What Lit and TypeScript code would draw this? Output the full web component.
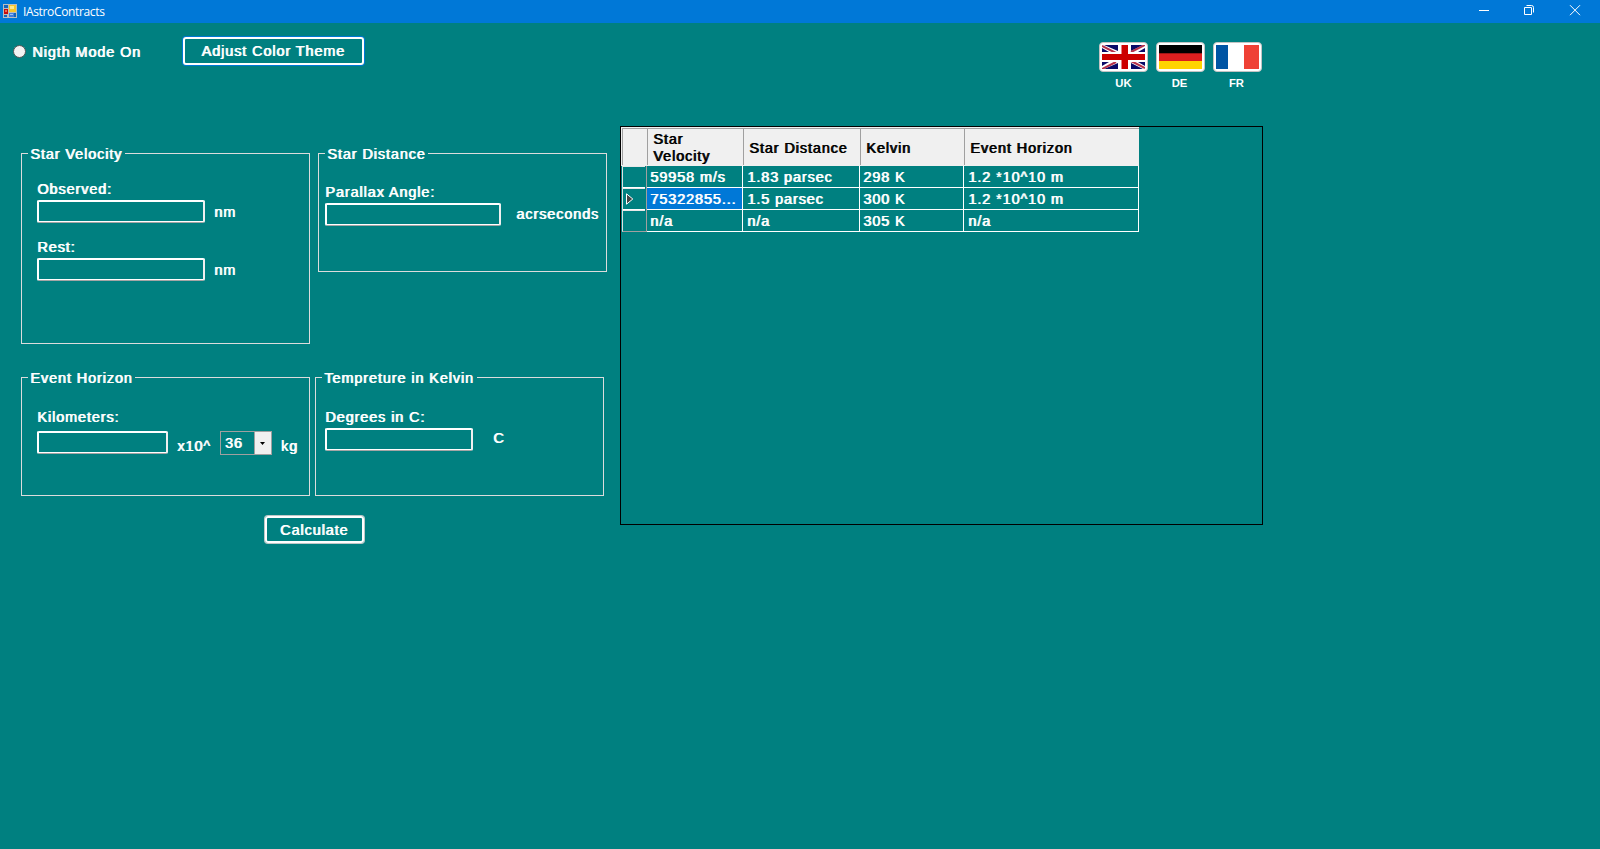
import { LitElement, html, css, svg } from "lit";
import { customElement, property } from "lit/decorators.js";

const ukFlag = svg`
  <svg class="flag" viewBox="0 0 43 24" width="43" height="24">
    <rect width="43" height="24" fill="#fff"/>
    <path d="M2 0H16V6Z M41 0H29V6Z M2 24H16V18Z M41 24H29V18Z M0 3V7H7Z M43 3V7H36Z M0 21V17H7Z M43 21V17H36Z" fill="#0a0a68"/>
    <path d="M0 1L14 8 M43 0L29 7 M0 24L14 17 M43 23L29 16" stroke="#b5304a" stroke-width="2"/>
    <path d="M17 0H28V24H17Z M0 7H43V17H0Z" fill="#fff"/>
    <path d="M19.500 0H26V24H19.500Z M0 9H43V15H0Z" fill="#cc0000"/>
  </svg>`;
const deFlag = svg`
  <svg class="flag" viewBox="0 0 43 24" width="43" height="24">
    <rect width="43" height="8" fill="#000"/>
    <rect y="8" width="43" height="8" fill="#dd1f1f"/>
    <rect y="8" width="43" height="1" fill="#9c1616"/>
    <rect y="16" width="43" height="8" fill="#ffd500"/>
  </svg>`;
const frFlag = svg`
  <svg class="flag" viewBox="0 0 43 24" width="43" height="24">
    <rect width="43" height="24" fill="#fff"/>
    <rect width="12" height="24" fill="#0055a4"/>
    <rect x="28" width="15" height="24" fill="#ef4135"/>
  </svg>`;

const textStyle = css`
  :host {
    font: 14.4px/16px "Liberation Sans", Arial, sans-serif;
    letter-spacing: 0.92px;
    color: #fff;
    text-shadow: 0.9px 0 0 currentColor;
    white-space: nowrap;
  }
  * { box-sizing: border-box; }
`;

@customElement("group-box")
class GroupBox extends LitElement {
  @property() caption = "";
  static styles = [textStyle, css`
    :host { display: block; box-sizing: border-box; width: 289px; border: 1px solid #dcdcdc; }
    .caption { width: fit-content; height: 16px; margin: -8px 0 0 6px; padding: 0 3px 0 2px; background: #008080; }
  `];
  render() {
    return html`<div class="caption">${this.caption}</div><slot></slot>`;
  }
}

@customElement("result-grid")
class ResultGrid extends LitElement {
  private columns = ["Star Velocity", "Star Distance", "Kelvin", "Event Horizon"];
  private rows = [
    ["59958 m/s", "1.83 parsec", "298 K", "1.2 *10^10 m"],
    ["75322855...", "1.5 parsec", "300 K", "1.2 *10^10 m"],
    ["n/a", "n/a", "305 K", "n/a"],
  ];
  static styles = [textStyle, css`
    :host { display: block; box-sizing: border-box; width: 643px; height: 399px; border: 1px solid #000; }
    .row { display: grid; grid-template-columns: 26px 96px 117px 104px 175px; width: 518px; height: 22px; }
    .head { height: 39px; border-top: 1px solid #f0f0f0; background: #f0f0f0; color: #000; }
    .th { display: flex; align-items: center; padding-left: 5px; border-top: 1px solid #a0a0a0; border-left: 1px solid #a0a0a0; line-height: 17px; white-space: normal; margin-bottom: 1px; padding-top: 1px; }
    .th.one { padding-top: 2px; }
    .th.corner { margin-left: 1px; }
    .td { padding: 3px 0 0 3px; border-right: 1px solid #fff; border-bottom: 1px solid #fff; }
    .td.wide { padding-left: 4px; }
    .td.sel { background: #0078d7; }
    .rh { display: flex; align-items: center; padding-left: 3px; margin-left: 1px; border-left: 1px solid #e0e0e0; border-right: 1px solid #a0a0a0; }
    .rh { background: linear-gradient(#fff, #fff) 100% 0 / 22px 1px no-repeat; }
    .rh { background: linear-gradient(#fff, #fff) 0 100% / 22px 1px no-repeat, linear-gradient(#e8e8e8, #e8e8e8) 0 0 / 22px 1px no-repeat; }
    .rh.last { background: linear-gradient(#e8e8e8, #e8e8e8) 0 0 / 22px 1px no-repeat; border-bottom: 1px solid #a0a0a0; }
  `];
  render() {
    return html`
      <div class="row head">
        <div class="th corner"></div>
        ${this.columns.map((c, i) => html`<div class="th ${i ? "one" : ""}">${i === 0 ? html`Star<br />Velocity` : c}</div>`)}
      </div>
      ${this.rows.map((r, ri) => html`
        <div class="row">
          <div class="rh ${ri === 2 ? "last" : ""}">
            ${ri === 1 ? html`<svg width="8" height="12" viewBox="0 0 8 12"><path d="M.5 .8V11.2L6.8 6Z" fill="#444" stroke="#fff"/></svg>` : ""}
          </div>
          ${r.map((c, ci) => html`<div class="td ${ci === 1 || ci === 3 ? "wide" : ""} ${ri === 1 && ci === 0 ? "sel" : ""}">${c}</div>`)}
        </div>`)}
    `;
  }
}

@customElement("app-root")
class AppRoot extends LitElement {
  static styles = [textStyle, css`
    :host { display: block; width: 1600px; height: 849px; overflow: hidden; background: #008080; }
    .titlebar { display: flex; height: 23px; background: #0078d7; padding-left: 3px; font: 12px/24px "Open Sans", sans-serif; letter-spacing: -0.35px; text-shadow: none; }
    .appicon { margin: 4px 6px 0 0; }
    .controls { margin-left: auto; }
    .top { display: flex; align-items: flex-start; width: 1263px; height: 103px; padding-left: 13px; }
    .radio { width: 13px; height: 13px; margin: 22px 6px 0 0; border: 1px solid #555; border-radius: 50%; background: #f3f3f3; }
    .mode { width: 150px; margin-top: 21px; }
    .btn { display: flex; align-items: center; justify-content: center; font: inherit; color: inherit; letter-spacing: inherit; text-shadow: inherit; background: none; padding: 0; border: 2px solid #fff; border-radius: 3px; }
    .theme { width: 181px; height: 28px; margin: 14px 0 0 1px; box-shadow: 0 0 0 1px #0078d7; padding-right: 1px; }
    .calc { width: 99px; height: 27px; margin: 20px 0 0 265px; box-shadow: 0 0 0 1px #c0c8c8; padding-right: 1px; }
    .flags { display: flex; gap: 8px; margin: 19px 1px 0 auto; }
    .lang { width: 49px; text-align: center; font: bold 11.3px/14px "Liberation Sans", Arial, sans-serif; letter-spacing: 0; text-shadow: none; }
    .lang span { display: block; }
    .lang:not(:first-child) span { margin-left: -2px; }
    .plate { height: 30px; padding: 2px; margin-bottom: 4px; background: #fff; border: 1px solid #c3c3c3; border-radius: 4px; }
    .flag { display: block; }
    .main { display: flex; }
    .left { width: 620px; padding-top: 27px; }
    .pair { display: flex; align-items: flex-start; padding-left: 21px; gap: 8px; }
    .pair.second { gap: 5px; margin-top: 33px; }
    .tall { height: 191px; }
    .short { height: 119px; }
    .field { display: flex; align-items: flex-start; }
    .box { height: 23px; border: 2px solid #fff; border-bottom-width: 1px; border-radius: 2px; box-shadow: inset 0 -1px 0 #fff; border-bottom-color: #a5a5a5; border-right-color: #f0f0f0; }
    .label { height: 16px; }
    .combo { display: flex; width: 52px; height: 24px; margin-left: 9px; border: 1px solid #a0a0a0; padding-left: 4px; }
    .combo span { width: 29px; padding-top: 3px; }
    .arrow { display: flex; align-items: center; justify-content: center; width: 17px; background: #f0f0f0; border-left: 1px solid #a0a0a0; }
    .in1 { padding: 19px 0 0 15px; }
    .in2 { padding: 22px 0 0 6px; }
    .in3 { padding: 23px 0 0 15px; }
    .in4 { padding: 23px 0 0 9px; }
    .w168 { width: 168px; } .w176 { width: 176px; } .w131 { width: 131px; } .w148 { width: 148px; }
    .unit { margin: 4px 0 0 9px; }
    .unit.arc { margin: 3px 0 0 15px; }
    .unit.pow { margin-top: 7px; }
    .unit.deg { margin: 2px 0 0 20px; }
    .first { margin: 3px 0 16px; }
    .g3 { margin-top: 3px; }
    .km { margin-top: 6px; }
  `];
  render() {
    return html`
      <div class="titlebar">
        <svg class="appicon" width="14" height="14" viewBox="0 0 14 14">
          <rect width="14" height="14" fill="#b9bdc0"/>
          <path d="M1 1H5V4H1Z M1 11H4V13H1Z M11 9H13V13H11Z" fill="#1565b8"/>
          <rect x="6" y="1" width="7" height="7" fill="#f5c62c"/>
          <rect x="7" y="2" width="4" height="3" fill="#ffe98a"/>
          <rect x="1" y="5" width="4" height="5" fill="#c40d0d"/>
          <rect x="2" y="6" width="2" height="2" fill="#ec6a50"/>
          <rect x="6" y="9" width="5" height="4" fill="#3f7de0"/>
          <rect x="7" y="10" width="3" height="1" fill="#9cc2f7"/>
        </svg>
        <span>IAstroContracts</span>
        <svg class="controls" width="122" height="23" viewBox="1478 0 122 23" fill="none" stroke="#fff">
          <path d="M1479 10.500H1489"/>
          <path d="M1524.500 7.500H1531.500V14.500H1524.500Z"/>
          <path d="M1526.500 5.500H1531.500Q1533.500 5.500 1533.500 7.500V12.500"/>
          <path d="M1570 5.200L1580 15.200M1580 5.200L1570 15.200"/>
        </svg>
      </div>
      <div class="top">
        <span class="radio"></span>
        <span class="mode">Nigth Mode On</span>
        <button class="btn theme">Adjust Color Theme</button>
        <div class="flags">
          <div class="lang"><div class="plate">${ukFlag}</div><span>UK</span></div>
          <div class="lang"><div class="plate">${deFlag}</div><span>DE</span></div>
          <div class="lang"><div class="plate">${frFlag}</div><span>FR</span></div>
        </div>
      </div>
      <div class="main">
        <div class="left">
          <div class="pair">
            <group-box class="tall" caption="Star Velocity">
              <div class="in1">
                <div class="label">Observed:</div>
                <div class="field first"><div class="box w168"></div><span class="unit">nm</span></div>
                <div class="label">Rest:</div>
                <div class="field g3"><div class="box w168"></div><span class="unit">nm</span></div>
              </div>
            </group-box>
            <group-box class="short" caption="Star Distance">
              <div class="in2">
                <div class="label">Parallax Angle:</div>
                <div class="field g3"><div class="box w176"></div><span class="unit arc">acrseconds</span></div>
              </div>
            </group-box>
          </div>
          <div class="pair second">
            <group-box class="short" caption="Event Horizon">
              <div class="in3">
                <div class="label">Kilometers:</div>
                <div class="field km"><div class="box w131"></div><span class="unit pow">x10^</span>
                  <div class="combo"><span>36</span><div class="arrow"><svg width="5" height="3"><path d="M0 0H5L2.500 3Z" fill="#000"/></svg></div></div>
                  <span class="unit pow">kg</span></div>
              </div>
            </group-box>
            <group-box class="short" caption="Tempreture in Kelvin">
              <div class="in4">
                <div class="label">Degrees in C:</div>
                <div class="field g3"><div class="box w148"></div><span class="unit deg">C</span></div>
              </div>
            </group-box>
          </div>
          <button class="btn calc">Calculate</button>
        </div>
        <result-grid></result-grid>
      </div>
    `;
  }
}
